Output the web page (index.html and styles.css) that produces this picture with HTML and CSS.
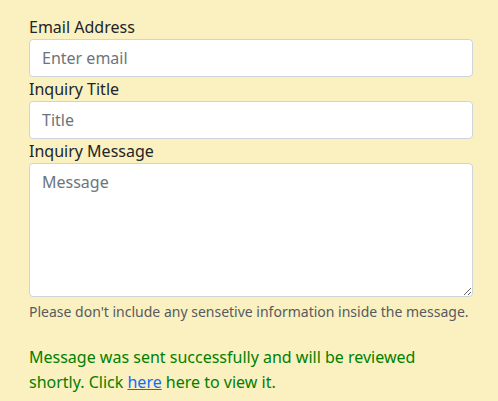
FILE: index.html
```html
<!DOCTYPE html>
<html lang="en">
<head>
<meta charset="utf-8">
<link rel="stylesheet" href="styles.css">
</head>
<body>
<form class="form">
  <div class="group">
    <label class="label" for="email">Email Address</label>
    <input class="control" id="email" type="email" placeholder="Enter email">
  </div>
  <div class="group">
    <label class="label" for="title">Inquiry Title</label>
    <input class="control" id="title" type="text" placeholder="Title">
  </div>
  <div class="group">
    <label class="label" for="msg">Inquiry Message</label>
    <textarea class="control area" id="msg" placeholder="Message"></textarea>
    <small class="help">Please don't include any sensetive information inside the message.</small>
  </div>
  <p class="success">Message was sent successfully and will be reviewed shortly. Click <a href="#">here</a> here to view it.</p>
</form>
</body>
</html>
```

FILE: styles.css
```css
html, body {
  margin: 0;
  padding: 0;
  background: #fbf0c0;
}
body {
  font-family: "Noto Sans", sans-serif;
  font-size: 16px;
  line-height: 1.5;
  color: #212529;
}
.form {
  padding: 15px 25px 0 29px;
}
.group {
  display: flex;
  flex-direction: column;
}
.label {
  display: block;
}
.control {
  display: block;
  box-sizing: border-box;
  width: 100%;
  height: 38px;
  margin: 0;
  padding: 6px 12px;
  font-family: "Noto Sans", sans-serif;
  font-size: 16px;
  line-height: 24px;
  color: #212529;
  background: #fff;
  border: 1px solid #ced4da;
  border-radius: 4px;
  outline: none;
}
.control::placeholder {
  color: #6c757d;
  opacity: 1;
}
.area {
  height: 134px;
  resize: vertical;
}
.help {
  display: block;
  margin-top: 4px;
  font-size: 14px;
  line-height: 21px;
  color: #555b60;
}
.success {
  margin: 23px 0 0;
  color: #008000;
  line-height: 25px;
}
.success a {
  color: #0d6efd;
}
```
